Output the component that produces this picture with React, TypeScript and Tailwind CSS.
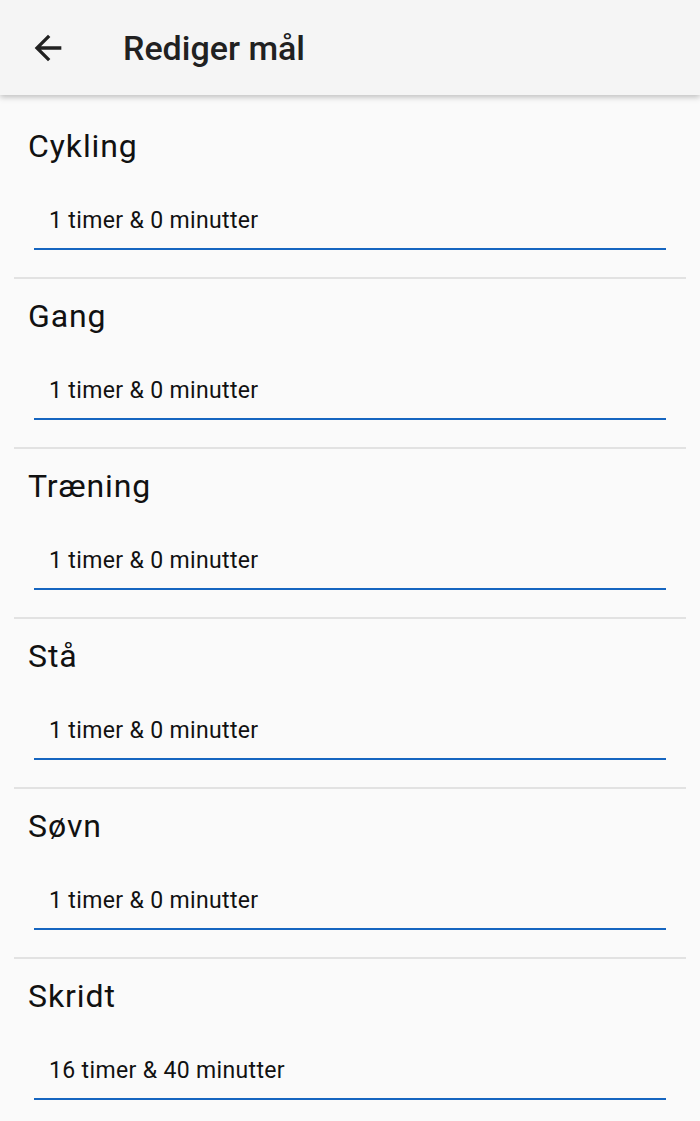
const goals = [
  { name: "Cykling", value: "1 timer & 0 minutter" },
  { name: "Gang", value: "1 timer & 0 minutter" },
  { name: "Træning", value: "1 timer & 0 minutter" },
  { name: "Stå", value: "1 timer & 0 minutter" },
  { name: "Søvn", value: "1 timer & 0 minutter" },
  { name: "Skridt", value: "16 timer & 40 minutter" },
];

const BackArrow = () => (
  <svg width="40" height="40" viewBox="0 0 24 24" fill="#212121">
    <path d="M20 11H7.83l5.59-5.59L12 4l-8 8 8 8 1.41-1.41L7.83 13H20v-2z" />
  </svg>
);

const App = () => {
  return (
    <div className="min-h-[1121px] bg-[#fafafa] font-['Roboto',sans-serif]">
      <header className="relative z-10 flex h-[95px] items-center bg-[#f5f5f5] shadow-[0_2px_6px_rgba(0,0,0,0.25)]">
        <div className="ml-[28px] flex h-[40px] w-[40px] items-center justify-center">
          <BackArrow />
        </div>
        <h1 className="ml-[55px] text-[34px] font-medium leading-[40px] text-[#212121]">
          Rediger mål
        </h1>
      </header>

      <main className="pt-[14px]">
        {goals.map((goal) => (
          <section key={goal.name}>
            <div className="pt-[19px]">
              <h2 className="pl-[28px] text-[32px] leading-[36px] tracking-[0.9px] text-[#111]">
                {goal.name}
              </h2>
              <div className="mx-[34px] mt-[43px] border-b-2 border-[#1565c0] pb-[13px] pl-[15px]">
                <span className="block text-[23px] leading-[28px] tracking-[0.35px] text-[#111]">
                  {goal.value}
                </span>
              </div>
            </div>
            <div className="mx-[14px] mt-[27px] h-[2px] bg-[#e2e2e2]" />
          </section>
        ))}
      </main>
    </div>
  );
};

export default App;
